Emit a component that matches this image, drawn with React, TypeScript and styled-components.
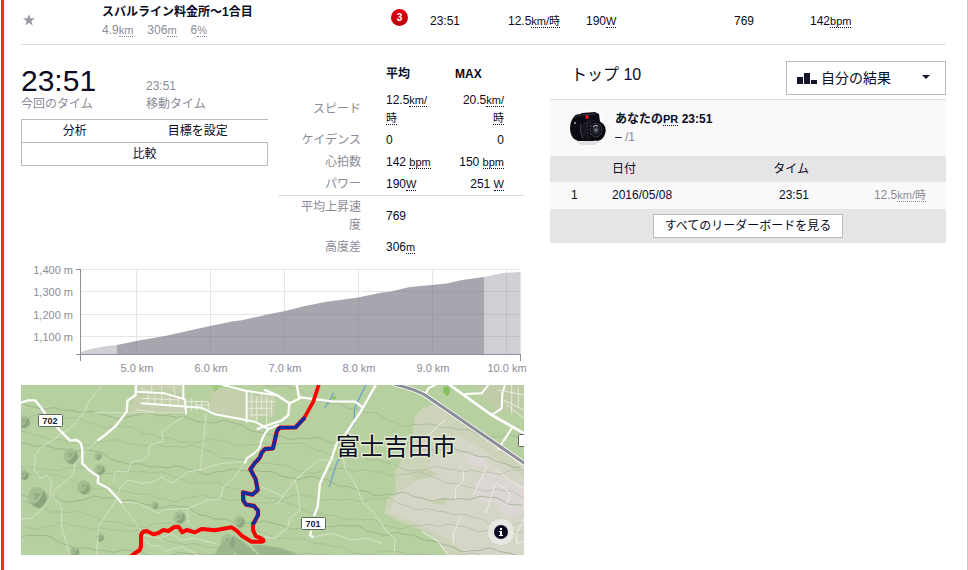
import React from "react";
import styled, { createGlobalStyle } from "styled-components";

const Global = createGlobalStyle`
  * { box-sizing: border-box; }
  body {
    margin: 0;
    background: #fff;
    color: #0b0b22;
    font: 12px/18px "Liberation Sans", "Noto Sans CJK JP", sans-serif;
  }
  button, select { font: inherit; color: inherit; }
  table { border-collapse: collapse; border-spacing: 0; width: 100%; table-layout: fixed; }
  th, td { padding: 0; text-align: left; }
`;

const Page = styled.main`
  min-height: 100vh;
  padding: 0 21px 15px 17px;
  border-right: 1px solid #c8c8cc;
  border-left: 3px solid #fc2a06;
  margin-left: 1px;
`;

const Unit = styled.abbr`
  font-size: 11px;
  text-decoration: none;
  border-bottom: 1px dotted currentColor;
`;

const SegmentTable = styled.table`
  border-bottom: 1px solid #dcdcdf;
  td { height: 44px; padding-bottom: 1px; white-space: nowrap; }
`;
const Col = styled.col<{ $w?: number }>`
  width: ${(p) => (p.$w ? `${p.$w}px` : "auto")};
`;
const StarButton = styled.button`
  display: block;
  width: 16px;
  height: 16px;
  padding: 0;
  border: 0;
  margin-bottom: 2px;
  background: none;
`;
const SegmentName = styled.strong`
  display: block;
`;
const SegmentFacts = styled.div`
  display: flex;
  gap: 14px;
  color: #8c8c98;
`;
const Badge = styled.span`
  display: block;
  width: 17px;
  height: 17px;
  margin: 0 0 7px 8px;
  border-radius: 50%;
  background: linear-gradient(#e3000f, #b60009);
  color: #fff;
  font-size: 10px;
  font-weight: bold;
  line-height: 17px;
  text-align: center;
`;

const Columns = styled.div`
  display: grid;
  grid-template-columns: minmax(0, 503fr) minmax(0, 396fr);
  column-gap: 26px;
  align-items: start;
  padding-top: 16px;
`;
const Effort = styled.section`
  display: grid;
  grid-template-columns: minmax(0, 247fr) minmax(0, 246fr);
  column-gap: 10px;
  padding-bottom: 2px;
`;
const Times = styled.div`
  display: grid;
  grid-template-columns: 125px 1fr;
  align-items: end;
  height: 58px;
  padding-bottom: 6px;
`;
const TimeBox = styled.div`
  white-space: nowrap;
  color: #8c8c98;
`;
const BigTime = styled.div`
  color: #0b0b22;
  font-size: 30px;
  line-height: 28px;
`;
const SmallTime = styled.div`
  line-height: 18px;
`;
const ButtonRow = styled.div`
  display: flex;
`;
const Action = styled.button<{ $grow: number; $place: "first" | "middle" | "full" }>`
  flex: ${(p) => p.$grow} 1 0;
  height: ${(p) => (p.$place === "full" ? 24 : 23)}px;
  padding: 0;
  background: #fff;
  border: 0 solid #b9b9c0;
  border-top-width: 1px;
  border-left-width: ${(p) => (p.$place === "middle" ? 0 : 1)}px;
  border-right-width: ${(p) => (p.$place === "full" ? 1 : 0)}px;
  border-bottom-width: ${(p) => (p.$place === "full" ? 1 : 0)}px;
  line-height: 20px;
`;

const Stats = styled.table`
  align-self: start;
  thead th { height: 28px; padding: 4px 0 6px 15px; vertical-align: top; }
  tbody th {
    padding: 2px 10px 2px 12px;
    color: #8c8c98;
    font-weight: normal;
    text-align: right;
  }
  td { padding: 2px 5px 2px 15px; }
  td + td { padding-right: 20px; text-align: right; }
  tbody + tbody { border-top: 1px solid #dcdcdf; }
`;

const ChartSvg = styled.svg`
  display: block;
  width: 100%;
  height: auto;
  overflow: visible;
  font: 11px "Liberation Sans", sans-serif;
  fill: #8c8c98;
`;
const MapSvg = styled.svg`
  display: block;
  width: 100%;
  height: auto;
`;

const BoardHead = styled.header`
  display: flex;
  justify-content: space-between;
  align-items: flex-start;
  height: 39px;
  padding-left: 21px;
  border-bottom: 1px solid #dcdcdf;
`;
const BoardTitle = styled.h2`
  margin: 0;
  font-size: 16px;
  font-weight: normal;
  line-height: 28px;
`;
const SelectWrap = styled.label`
  position: relative;
  display: block;
  width: 160px;
`;
const Select = styled.select`
  appearance: none;
  display: block;
  width: 100%;
  height: 34px;
  padding: 0 30px 0 34px;
  border: 1px solid #b9b9c0;
  border-radius: 0;
  background: #fff;
  font-size: 14px;
`;
const SelectArt = styled.svg`
  position: absolute;
  inset: 0;
  width: 160px;
  height: 34px;
  pointer-events: none;
  fill: #14142b;
`;
const Personal = styled.div`
  display: flex;
  gap: 9px;
  height: 56px;
  padding: 10px 20px;
  background: #f9f9f9;
`;
const Muted = styled.span`
  color: #8c8c98;
`;
const Leaders = styled.table`
  th, td { height: 26px; }
  th { background: #e5e5e8; font-weight: normal; }
  td { height: 27px; background: #f9f9f9; }
  tr > :first-child { padding-left: 21px; }
  tr > :nth-child(3) { text-align: right; }
  tr > :last-child { padding-right: 20px; text-align: right; color: #8c8c98; }
`;
const BoardFoot = styled.footer`
  display: flex;
  justify-content: center;
  padding: 5px 0;
  background: #e5e5e8;
`;
const AllButton = styled.button`
  height: 24px;
  padding: 0 11px;
  border: 1px solid #b9b9c0;
  background: #fff;
  line-height: 20px;
`;

function Camera() {
  return (
    <svg width="36" height="36" viewBox="0 0 36 36" aria-label="プロフィール写真">
      <defs>
        <clipPath id="face"><circle cx="18" cy="18" r="18" /></clipPath>
        <radialGradient id="lens"><stop offset="0" stopColor="#8b8d98" /><stop offset=".4" stopColor="#2a2b38" /><stop offset="1" stopColor="#06060b" /></radialGradient>
      </defs>
      <g clipPath="url(#face)">
        <rect width="36" height="36" fill="#fdfdfd" />
        <ellipse cx="19" cy="33" rx="13" ry="2" fill="#dedee2" />
        <path d="M-1 8 L4 5 L10 4 L12 3 L25 2 L29 4 L30 12 L30 27 L24 31 L8 31 L2 28 L-1 24Z" fill="#0c0c14" />
        <path d="M2 8 L10 5 L26 4" stroke="#3a3a46" fill="none" />
        <circle cx="17" cy="7" r="2" fill="#e2121d" />
        <circle cx="5" cy="13" r="1" fill="#a5a5b0" />
        <path d="M11 14 Q9 21 13 28" stroke="#4a4a57" fill="none" />
        <ellipse cx="20" cy="19" rx="9" ry="10" fill="#16161f" />
        <ellipse cx="27" cy="21" rx="9" ry="10" fill="#08080e" />
        <path d="M17 13 L18 25 M20 12 L21 26" stroke="#555562" strokeDasharray="1 2" />
        <ellipse cx="26" cy="20" rx="6" ry="7" fill="url(#lens)" stroke="#3e3e4a" />
        <path d="M23 17 Q25 14 28 16" stroke="#c7c9d0" fill="none" />
      </g>
    </svg>
  );
}

const GRID_Y: [number, string][] = [[9, "1,400 m"], [31, "1,300 m"], [54, "1,200 m"], [76, "1,100 m"]];
const GRID_X: [number, string][] = [[115, "5.0 km"], [189, "6.0 km"], [263, "7.0 km"], [337, "8.0 km"], [411, "9.0 km"], [485, "10.0 km"]];

function Elevation() {
  return (
    <ChartSvg viewBox="0 0 503 125" role="img" aria-label="標高">
      <g stroke="#e6e6e8" shapeRendering="crispEdges">
        {GRID_Y.map(([y]) => <path key={y} d={`M60 ${y + 0.5}H499`} />)}
        {GRID_X.map(([x]) => <path key={x} d={`M${x + 0.5} 9V94`} />)}
        <path d="M499.5 12V94" />
      </g>
      <path d="M60 92L69 89L86 86L96 85V94H60Z M463 17L482 13L499 12V94H463Z" fill="#747482" fillOpacity=".34" />
      <path d="M96 85L115 81L144 76L189 66L211 61.500L222 60L249 54L264 51L284 46L304 42L337 37.500L361 32.500L370 31.500L389 27L411 25L426 23.500L441 20L463 17V94H96Z" fill="#6f6f7e" fillOpacity=".62" />
      <path d="M55 9.500H60M59.500 9V101M55 94.500H499.500V101" fill="none" stroke="#8f8f9c" shapeRendering="crispEdges" />
      {GRID_Y.map(([y, t]) => <text key={t} x="52" y={y + 5} textAnchor="end">{t}</text>)}
      {GRID_X.map(([x, t]) => <text key={t} x={x + 1} y="112" textAnchor="middle">{t}</text>)}
    </ChartSvg>
  );
}

function wave(y: number, slope: number, seed: number, x0: number, x1: number) {
  let d = "";
  for (let x = x0; x <= x1; x += 9) {
    const v = y + (x - x0) * slope + Math.sin(x / 37 + seed) * 6 + Math.sin(x / 9 + seed * 3) * 2 + Math.sin(x / 21 + seed * 5) * 4 + Math.sin(x / 110 + seed * 2) * 12;
    d += `${d ? "L" : "M"}${x} ${Math.round(v)}`;
  }
  return d;
}

function Shield({ x, y, label }: { x: number; y: number; label: string }) {
  return (
    <g>
      <rect x={x + 0.5} y={y + 0.5} width="24" height="12" rx="1" fill="#fff" stroke="#5d6b5c" />
      {label && <text x={x + 12} y={y + 10} textAnchor="middle" fontSize="9" fontWeight="bold" fontFamily="Liberation Sans, sans-serif" fill="#222">{label}</text>}
    </g>
  );
}

const HILLS = [
  [170, 228, 24], [70, 352, 32], [208, 322, 22], [256, 268, 17], [28, 285, 16], [28, 125, 20], [250, 228, 12],
  [495, 412, 20], [420, 375, 12], [256, 472, 13], [675, 425, 18], [180, 515, 15], [640, 485, 24],
];
const RED_SOUTH = "M350 527L374 510L378 500V465Q382 453 395 453L415 463L430 459L445 450L460 453L478 441L490 440L502 457L515 450L540 457L560 447L600 451L625 446L650 442L665 452L680 467L710 485H740Q752 482 740 476L722 468L714 450V430";
const BLUE = "M117 115L92 142L45 143Q36 147 33 165L24 205L0 207L-10 218Q-14 235 -30 248L-44 268L-28 298L-22 330L-38 344L-66 337L-65 362L-57 374L-33 378L-21 392V405L-34 430";

function RouteMap() {
  return (
    <MapSvg viewBox="0 0 503 170" role="img" aria-label="地図">
      <rect width="503" height="170" fill="#b7d0a0" />
      <g transform="scale(.333333)" fill="none" strokeLinejoin="round" strokeLinecap="round">
        <g transform="translate(732 -15)">
          <path d="M470 85L510 72L540 95L640 165L777 250V525H545Q510 470 470 450L395 420L358 400L365 360L392 335L390 275L410 240L440 180L450 110Z" fill="#cdd3b8" />
          <path d="M540 165L590 170L640 200L777 290V525H600Q570 480 540 470L450 430L375 398L390 350L470 290L500 240Z" fill="#d6d6c8" />
          <path d="M630 310L680 270L720 290L777 330V400L720 410L690 370L640 360Z M600 225L650 230L680 260L620 260Z" fill="#dcd7d4" />
          <path d="M430 280L490 265L520 285L460 300Z M490 370L550 350L540 375Z" fill="#c7d1b1" />
          <path d="M640 15H777V110L740 90L700 100L670 70L640 45Z" fill="#bfcca7" />
          <path d="M535 22L550 18L556 35L548 48L535 40Z M202 50L212 48L212 58L202 58Z" fill="#86c05c" />
        </g>
        <g transform="translate(-18 -15)">
          <path d="M600 25L695 33V122L650 115L585 95L583 60Z M362 15H505V42L440 30L365 36Z M362 45H510V98H340Z M700 45H780V100L700 120Z" fill="#c5cfae" />
          <path d="M590 15L620 18L600 35Z" fill="#a0c77a" />
        </g>
        <g stroke="#8fa884" strokeWidth="3">
          {[50, 95, 140, 185, 230, 275, 320, 365, 410, 455].map((y, i) => (
            <path key={y} d={wave(y, 0.12, i * 1.7, 0, 1509)} strokeOpacity={i % 3 ? 0.38 : 0.65} />
          ))}
          <path d={wave(-20, 0.22, 2, 600, 1509)} strokeOpacity=".45" />
        </g>
        <g transform="translate(-18 -15)">
          {HILLS.map(([x, y, r]) => (
            <g key={`${x}-${y}`}>
              <path d={`M${x - r} ${y + r * 0.3}Q${x - r} ${y - r} ${x} ${y - r}Q${x + r} ${y - r * 0.6} ${x + r} ${y + r * 0.3}Q${x} ${y + r * 1.8} ${x - r} ${y + r * 0.3}Z`} fill="#a5bf93" />
              <path d={`M${x - r * 0.8} ${y + r * 0.5}Q${x} ${y + r * 0.9} ${x + r * 0.5} ${y - r * 0.6}Q${x + r * 1.2} ${y + r * 0.4} ${x} ${y + r}Z`} fill="#8aa47e" />
              <path d={`M${x - r * 0.4} ${y - r * 0.4}L${x + r * 0.3} ${y - r * 0.4}L${x - r * 0.3} ${y + r * 0.3}Z`} fill="#93ad86" />
            </g>
          ))}
          <path d="M655 465L690 490L730 525H665L645 500Z M740 495L800 505L850 525H735L710 495Z" fill="#8ba680" fillOpacity=".65" />
          <path d="M610 500L640 480L660 525H600Z" fill="#9cb68c" />
        </g>
        <path transform="translate(732 -15)" d="M303 15L275 70L268 90L268 130L240 165L235 215L215 250L193 320M205 40L195 60L180 82" stroke="#6ea6c9" strokeWidth="4" />
        <g stroke="#d5e0c3" strokeWidth="3" transform="translate(-18 -15)">
          <path d="M265 15L220 65L210 95L160 150L120 175L80 200L62 225L58 270L75 295L95 285L110 300L105 340L140 380L140 440L165 525M18 418L50 415L85 385L120 330L175 285L180 250L215 210L250 180" />
          <path d="M505 110L475 130L440 155L445 185L405 195L400 225L385 240L350 245L340 275L300 275L295 305M573 100L565 190L555 270L620 250L690 245M315 365L380 455M315 365L370 370L430 400L445 390L520 385L580 360L615 358L625 320L660 290L690 245M240 98H505M555 270L520 275L500 290L470 310L440 290L420 305L380 310L340 300L315 325L300 365L250 440L245 525M515 385L520 430L550 450" />
          <path d="M385 465L430 475L470 462L500 480L540 475L600 490M390 480L410 500L430 495L450 515L500 500L550 525" />
        </g>
        <g stroke="#e4e9d8" strokeWidth="3" transform="translate(-18 -15)">
          <path d="M380 25L410 40M410 15V40M440 15V42M475 15L480 45M530 55V90M545 60V90M560 60V90M515 65H580V95M400 45V70M420 45V70M440 42V70M465 45V70M490 55V75M380 55L490 60M540 75H585M365 90L415 95M710 40V110M725 50V120M740 40V90M755 50V130M770 60V110M700 65H780M700 85H770M705 105H760" />
        </g>
        <g stroke="#fff" transform="translate(-18 -15)">
          <path d="M18 68L40 61H60L80 85L100 115L165 182L185 180L198 190L202 210V250L222 270L250 290L248 308L280 325L318 367" strokeWidth="7" />
          <path d="M363 15L362 45L338 62L335 95L320 115L300 140L270 165L250 180" strokeWidth="7" />
          <path d="M362 35L450 40L510 58L513 100M505 15V58M380 70L560 83L600 103L720 125L760 147L790 135M760 147Q740 170 735 200Q725 218 695 235L690 248M625 15L695 33L780 45M695 33V125" strokeWidth="6" />
        </g>
        <g transform="translate(732 -15)" stroke="#fff">
          <path d="M332 15L290 90L240 165L215 190L200 235L165 310L158 380L148 405M138 455L135 465L143 470M-22 147L0 138L50 122L70 105L73 70L35 45L0 30M73 70L95 60L110 52L200 64L270 65L293 82M95 15L102 50" strokeWidth="7" />
          <path d="M555 15L610 55L680 105L777 160" strokeWidth="8" />
          <path d="M680 105L710 85L712 40L720 15M480 45L490 25L510 15M600 42L650 40L670 15M740 145L700 207" strokeWidth="6" />
          <path d="M0 470L30 475L70 440L75 415L105 390L100 340L90 300L130 265L160 240L210 240M235 235L240 265L270 310L295 370L325 395L350 430L360 450L390 475L388 520M-10 320L55 350M35 375L90 300M150 470L200 460L260 480L310 475L350 490" strokeWidth="3" stroke="#d8e2c8" />
          <path d="M540 120L485 170M595 275V300L572 325V355M665 260L625 345M585 415L565 460V495M690 265L740 305L777 325M690 315L662 400M697 310L730 335L735 345L725 375M777 415L755 460V490L777 485M470 455L520 485L550 525M735 225L777 265" strokeWidth="3" stroke="#ecece4" />
          <path d="M700 30L777 45M715 60L777 90M740 15V100M760 25V80M725 75L777 115" strokeWidth="3" stroke="#e8ebdd" />
          <path d="M390 13Q450 28 480 45L560 100L777 249" strokeWidth="14" />
          <path d="M390 13Q450 28 480 45L560 100L777 249" stroke="#8d8d9a" strokeWidth="9" />
        </g>
        <g stroke="#f00">
          <path transform="translate(732 -15)" d="M162 12L145 65L117 115" strokeWidth="11" />
          <path transform="translate(-18 -15)" d={RED_SOUTH} strokeWidth="12" />
          <path transform="translate(732 -15)" d={BLUE} strokeWidth="13" />
        </g>
        <path transform="translate(732 -15)" d={BLUE} stroke="#0b30a5" strokeWidth="10" />
      </g>
      <Shield x={17} y={29} label="702" />
      <Shield x={280} y={132} label="701" />
      <Shield x={497} y={49} label="" />
      <text x="315" y="70" fontSize="24" fontFamily="Noto Sans CJK JP, sans-serif" fill="#0b0b22" stroke="#dfe7cf" strokeWidth="3" paintOrder="stroke">富士吉田市</text>
      <circle cx="480" cy="147" r="13" fill="#efefec" fillOpacity=".7" />
      <circle cx="480" cy="147" r="7" fill="#0b0b22" />
      <path d="M478 146h3v4h1v1h-4v-1h1v-3h-1zM479 143h2v2h-2z" fill="#fff" />
    </MapSvg>
  );
}

export default function App() {
  return (
    <>
      <Global />
      <Page>
        <SegmentTable>
          <colgroup>
            <Col $w={81} /><Col $w={281} /><Col $w={47} /><Col $w={78} /><Col $w={78} /><Col $w={148} /><Col $w={76} /><Col />
          </colgroup>
          <tbody>
            <tr>
              <td>
                <StarButton aria-label="お気に入り">
                  <svg width="16" height="16" viewBox="0 0 16 16"><path d="M8 2l1.500 4.300H14l-3.600 2.700 1.300 4.400L8 10.800l-3.700 2.600 1.300-4.400L2 6.300h4.500z" fill="#9a9aa6" /></svg>
                </StarButton>
              </td>
              <td>
                <SegmentName>スバルライン料金所〜1合目</SegmentName>
                <SegmentFacts>
                  <span>4.9<Unit>km</Unit></span><span>306<Unit>m</Unit></span><span>6<Unit>%</Unit></span>
                </SegmentFacts>
              </td>
              <td><Badge>3</Badge></td>
              <td>23:51</td>
              <td>12.5<Unit>km/時</Unit></td>
              <td>190<Unit>W</Unit></td>
              <td>769</td>
              <td>142<Unit>bpm</Unit></td>
            </tr>
          </tbody>
        </SegmentTable>
        <Columns>
          <div>
            <Effort>
              <div>
                <Times>
                  <TimeBox><BigTime>23:51</BigTime>今回のタイム</TimeBox>
                  <TimeBox><SmallTime>23:51</SmallTime>移動タイム</TimeBox>
                </Times>
                <ButtonRow>
                  <Action $grow={106} $place="first">分析</Action>
                  <Action $grow={141} $place="middle">目標を設定</Action>
                </ButtonRow>
                <ButtonRow><Action $grow={1} $place="full">比較</Action></ButtonRow>
              </div>
              <Stats>
                <colgroup><Col $w={93} /><Col $w={69} /><Col /></colgroup>
                <thead><tr><td /><th>平均</th><th>MAX</th></tr></thead>
                <tbody>
                  <tr><th>スピード</th><td>12.5<Unit>km/時</Unit></td><td>20.5<Unit>km/時</Unit></td></tr>
                  <tr><th>ケイデンス</th><td>0</td><td>0</td></tr>
                  <tr><th>心拍数</th><td>142 <Unit>bpm</Unit></td><td>150 <Unit>bpm</Unit></td></tr>
                  <tr><th>パワー</th><td>190<Unit>W</Unit></td><td>251 <Unit>W</Unit></td></tr>
                </tbody>
                <tbody>
                  <tr><th>平均上昇速度</th><td>769</td><td /></tr>
                  <tr><th>高度差</th><td>306<Unit>m</Unit></td><td /></tr>
                </tbody>
              </Stats>
            </Effort>
            <Elevation />
            <RouteMap />
          </div>
          <section>
            <BoardHead>
              <BoardTitle>トップ 10</BoardTitle>
              <SelectWrap>
                <Select aria-label="表示する結果"><option>自分の結果</option></Select>
                <SelectArt viewBox="0 0 160 34" aria-hidden="true">
                  <path d="M11 16h6v7h-6zM18 12h6v11h-6zM25 19h6v4h-6zM136 14h8l-4 4z" />
                </SelectArt>
              </SelectWrap>
            </BoardHead>
            <Personal>
              <Camera />
              <div>
                <strong>あなたの<Unit>PR</Unit> 23:51</strong>
                <div>– <Muted>/1</Muted></div>
              </div>
            </Personal>
            <Leaders>
              <colgroup><Col $w={62} /><Col /><Col $w={97} /><Col $w={137} /></colgroup>
              <thead><tr><th /><th>日付</th><th>タイム</th><th /></tr></thead>
              <tbody><tr><td>1</td><td>2016/05/08</td><td>23:51</td><td>12.5<Unit>km/時</Unit></td></tr></tbody>
            </Leaders>
            <BoardFoot><AllButton>すべてのリーダーボードを見る</AllButton></BoardFoot>
          </section>
        </Columns>
      </Page>
    </>
  );
}
